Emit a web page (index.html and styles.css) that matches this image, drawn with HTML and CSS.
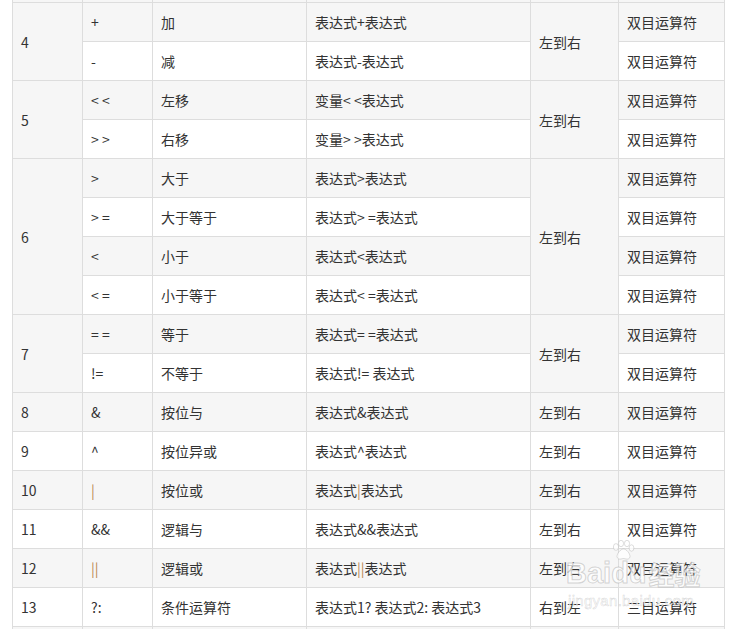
FILE: index.html
```html
<!DOCTYPE html>
<html lang="zh-CN">
<head>
<meta charset="utf-8">
<title>运算符优先级</title>
<link rel="stylesheet" href="styles.css">
</head>
<body>
<div class="page">
  <table class="ops">
    <colgroup>
      <col class="c1"><col class="c2"><col class="c3"><col class="c4"><col class="c5"><col class="c6">
    </colgroup>
    <tbody>
      <tr><td>3</td><td>%</td><td>余数（取模）</td><td>整型表达式%整型表达式</td><td>左到右</td><td>双目运算符</td></tr>
      <tr><td rowspan="2">4</td><td>+</td><td>加</td><td>表达式+表达式</td><td rowspan="2">左到右</td><td>双目运算符</td></tr>
      <tr><td>-</td><td>减</td><td>表达式-表达式</td><td>双目运算符</td></tr>
      <tr><td rowspan="2">5</td><td>&lt; &lt;</td><td>左移</td><td>变量&lt; &lt;表达式</td><td rowspan="2">左到右</td><td>双目运算符</td></tr>
      <tr><td>&gt; &gt;</td><td>右移</td><td>变量&gt; &gt;表达式</td><td>双目运算符</td></tr>
      <tr><td rowspan="4">6</td><td>&gt;</td><td>大于</td><td>表达式&gt;表达式</td><td rowspan="4">左到右</td><td>双目运算符</td></tr>
      <tr><td>&gt; =</td><td>大于等于</td><td>表达式&gt; =表达式</td><td>双目运算符</td></tr>
      <tr><td>&lt;</td><td>小于</td><td>表达式&lt;表达式</td><td>双目运算符</td></tr>
      <tr><td>&lt; =</td><td>小于等于</td><td>表达式&lt; =表达式</td><td>双目运算符</td></tr>
      <tr><td rowspan="2">7</td><td>= =</td><td>等于</td><td>表达式= =表达式</td><td rowspan="2">左到右</td><td>双目运算符</td></tr>
      <tr><td>!=</td><td>不等于</td><td>表达式!= 表达式</td><td>双目运算符</td></tr>
      <tr><td>8</td><td>&amp;</td><td>按位与</td><td>表达式&amp;表达式</td><td>左到右</td><td>双目运算符</td></tr>
      <tr><td>9</td><td>^</td><td>按位异或</td><td>表达式^表达式</td><td>左到右</td><td>双目运算符</td></tr>
      <tr><td>10</td><td><span class="bar">|</span></td><td>按位或</td><td>表达式<span class="bar">|</span>表达式</td><td>左到右</td><td>双目运算符</td></tr>
      <tr><td>11</td><td>&amp;&amp;</td><td>逻辑与</td><td>表达式&amp;&amp;表达式</td><td>左到右</td><td>双目运算符</td></tr>
      <tr><td>12</td><td><span class="bar">||</span></td><td>逻辑或</td><td>表达式<span class="bar">||</span>表达式</td><td>左到右</td><td>双目运算符</td></tr>
      <tr><td>13</td><td>?:</td><td>条件运算符</td><td>表达式1? 表达式2: 表达式3</td><td>右到左</td><td>三目运算符</td></tr>
      <tr><td>14</td><td>=</td><td>赋值运算符</td><td>变量=表达式</td><td>右到左</td><td>--</td></tr>
    </tbody>
  </table>
  <div class="watermark" aria-hidden="true">
    <div class="wm-main">
      <span>Bai</span><span class="wm-du"><svg class="paw" viewBox="0 0 24 20" width="24" height="20"><ellipse cx="5" cy="7" rx="2.6" ry="3.4"/><ellipse cx="10" cy="3.5" rx="2.6" ry="3.2"/><ellipse cx="16" cy="3.5" rx="2.6" ry="3.2"/><ellipse cx="20.5" cy="8" rx="2.4" ry="3.2"/><path d="M12.5 9c-3 0-6.5 4.5-6.5 7.5 0 2 2 3 4 2.5 1-.2 1.8-.5 2.5-.5s1.5.3 2.5.5c2 .5 4-.5 4-2.5 0-3-3.5-7.5-6.5-7.5z"/></svg>du</span><span class="wm-cn">经验</span>
    </div>
    <div class="wm-url">jingyan.baidu.com</div>
  </div>
</div>
</body>
</html>
```
FILE: styles.css
```css
html, body {
  margin: 0;
  padding: 0;
  background: #ffffff;
}
.page {
  position: relative;
  padding: 0 12px;
  margin-top: -37px;
  font-family: "Noto Sans CJK SC", "Microsoft YaHei", sans-serif;
  font-size: 14px;
  color: #333333;
}
.ops {
  border-collapse: collapse;
  table-layout: fixed;
  width: 712px;
}
.c1 { width: 70px; }
.c2 { width: 70px; }
.c3 { width: 154px; }
.c4 { width: 224px; }
.c5 { width: 88px; }
.c6 { width: 106px; }
.ops td {
  border: 1px solid #dddddd;
  padding: 8px 8px;
  height: 22px;
  line-height: 22px;
  vertical-align: middle;
  white-space: nowrap;
  overflow: hidden;
}
.ops tr:nth-child(odd) td {
  background: #ffffff;
}
.ops tr:nth-child(even) td {
  background: #f6f6f6;
}
.ops tr:first-child td {
  background: #f6f6f6;
}
.bar {
  color: #b9864f;
}
.watermark {
  position: absolute;
  left: 566px;
  top: 596px;
  font-family: "Liberation Sans", Arial, sans-serif;
  color: rgba(255, 255, 255, 0.75);
  pointer-events: none;
}
.wm-main {
  display: flex;
  align-items: flex-end;
  font-size: 29px;
  font-weight: bold;
  line-height: 29px;
  -webkit-text-stroke: 1px rgba(150, 150, 150, 0.4);
}
.wm-du {
  position: relative;
}
.paw {
  position: absolute;
  left: 0;
  top: -19px;
  fill: rgba(255, 255, 255, 0.75);
  stroke: rgba(150, 150, 150, 0.4);
  stroke-width: 0.8;
}
.wm-cn {
  font-family: "Noto Sans CJK SC", sans-serif;
  font-size: 26px;
  margin-left: 2px;
}
.wm-url {
  font-size: 15px;
  line-height: 17px;
  margin-top: 4px;
  margin-left: 2px;
  letter-spacing: 0.3px;
  -webkit-text-stroke: 0.5px rgba(150, 150, 150, 0.4);
}
```
